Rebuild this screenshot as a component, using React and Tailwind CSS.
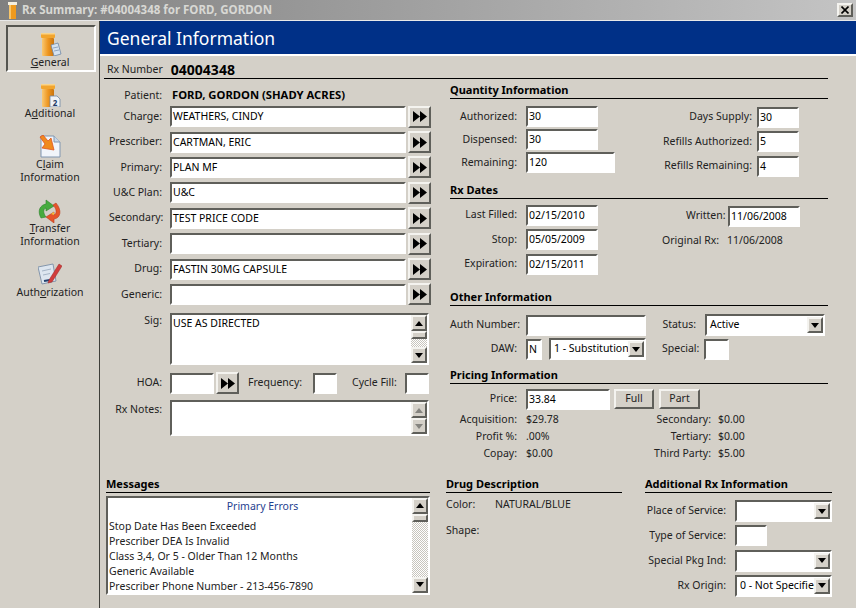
const F = { fontFamily: '"Noto Sans", Tahoma, sans-serif' };

const insetBox = "border-2 border-t-[#5f5f5a] border-l-[#5f5f5a] border-r-white border-b-white bg-white";
const raised = "border-2 border-t-[#f4f3ef] border-l-[#f4f3ef] border-r-[#5f5f5a] border-b-[#5f5f5a] bg-[#d4d0c8]";
const labelText = "text-[10.5px] text-[#222]";

function Input({ value = "", w = "w-[72px]" }) {
  return <div className={`${insetBox} ${w} h-[21px] shrink-0 px-[1px] text-[10.5px] leading-[17px] text-black whitespace-nowrap overflow-hidden`}>{value}</div>;
}

function FF() {
  return (
    <div className={`${raised} w-[23px] h-[22px] shrink-0 flex items-center justify-center`}>
      <svg width="14" height="11" viewBox="0 0 14 11"><path d="M0 0 L7 5.5 L0 11 Z M7 0 L14 5.5 L7 11 Z" fill="#000" /></svg>
    </div>
  );
}

function Arrow({ dir = "down", disabled }) {
  return (
    <div className={`${raised} w-[16px] h-[16px] shrink-0 flex items-center justify-center`}>
      <svg width="8" height="5" viewBox="0 0 8 5"><path d={dir === "down" ? "M0 0 H8 L4 5 Z" : "M0 5 H8 L4 0 Z"} fill={disabled ? "#85847f" : "#000"} /></svg>
    </div>
  );
}

function Select({ value = "", w, h = "h-[22px]" }) {
  return (
    <div className={`${insetBox} ${w} ${h} shrink-0 flex items-center justify-between text-[10.5px] text-black`}>
      <span className="pl-[3px] whitespace-nowrap overflow-hidden">{value}</span>
      <Arrow />
    </div>
  );
}

function Scrollbar({ disabled, thumb }) {
  return (
    <div className="w-[16px] h-full shrink-0 flex flex-col justify-between bg-[repeating-conic-gradient(#ffffff_0_25%,#c8c5bd_0_50%)] bg-[length:2px_2px]">
      <div>
        <Arrow dir="up" disabled={disabled} />
        {thumb && <div className={`${raised} h-[8px]`} />}
      </div>
      <Arrow dir="down" disabled={disabled} />
    </div>
  );
}

function Heading({ children, className = "" }) {
  return <div className={`font-bold text-[11px] leading-[14px] text-black border-b border-black pb-[1px] ${className}`}>{children}</div>;
}

function Row({ label, children }) {
  return (
    <div className="flex items-center h-[25.4px]">
      <div className={`w-[53px] text-right shrink-0 ${labelText} whitespace-nowrap`}>{label}</div>
      <div className="ml-[8px] flex items-center gap-[2px] min-w-0">{children}</div>
    </div>
  );
}

function Bottle({ badge, id }) {
  return (
    <svg width="24" height="23" viewBox="0 0 24 23" className="shrink-0">
      <defs>
        <linearGradient id={id} x1="0" x2="1" y1="0" y2="0">
          <stop offset="0" stopColor="#f9c872" />
          <stop offset="0.5" stopColor="#ee9620" />
          <stop offset="1" stopColor="#c9740f" />
        </linearGradient>
      </defs>
      <rect x="3" y="0" width="14" height="5" rx="1" fill="#f2a52e" />
      <rect x="3" y="0" width="14" height="1.5" fill="#f9d48a" />
      <rect x="4" y="5" width="12" height="18" rx="1" fill={`url(#${id})`} />
      {badge === "doc" && (
        <g>
          <path d="M13 12 L20 10 L23 21 L16 23 Z" fill="#d5e2f0" stroke="#6f88a6" strokeWidth="0.8" />
          <path d="M15 15 L20 14 M16 18 L21 17" stroke="#7f97b5" strokeWidth="0.8" />
        </g>
      )}
      {badge === "2" && (
        <g>
          <path d="M12 12 H19 L22 15 V23 H12 Z" fill="#eef2f7" stroke="#6f88a6" strokeWidth="0.8" />
          <text x="17" y="21.5" fontSize="8" fontWeight="bold" textAnchor="middle" fill="#223a66" style={F}>2</text>
        </g>
      )}
    </svg>
  );
}

function ClaimIcon() {
  return (
    <svg width="23" height="23" viewBox="0 0 23 23" className="shrink-0">
      <path d="M2 1 H15 L21 7 V22 H2 Z" fill="#f1f5fa" stroke="#8096b0" />
      <path d="M15 1 V7 H21" fill="#c8d6e6" stroke="#8096b0" />
      <path d="M1 2 L4 0 L9 6 L12 3 L15 15 L3 13 L6 9 Z" fill="#f08a1e" stroke="#e0531f" strokeWidth="0.8" />
    </svg>
  );
}

function TransferIcon() {
  return (
    <svg width="24" height="24" viewBox="0 0 24 24" className="shrink-0 -mb-[1px]">
      <path d="M3 19 C-1 12 2 6 8 5 L8 1 L16 7 L8 12 L8 9 C5 10 5 14 8 18 Z" fill="#46ab3e" stroke="#2f7f2d" strokeWidth="0.6" />
      <path d="M18 4 C24 11 23 19 16 20 L16 24 L8 18 L16 13 L16 16 C19 15 19 10 15 6 Z" fill="#e6552b" stroke="#b83d1d" strokeWidth="0.6" />
      <path d="M13 15 L16 13 L16 16 Z" fill="#f5c23a" />
    </svg>
  );
}

function AuthIcon() {
  return (
    <svg width="24" height="23" viewBox="0 0 24 23" className="shrink-0">
      <path d="M0 4 L15 1 L18 18 L4 21 Z" fill="#dde6f0" stroke="#8496ac" />
      <path d="M4 8 L13 6 M5 12 L12 10.5" stroke="#a5b4c6" />
      <path d="M6 18 L12 17" stroke="#23406e" strokeWidth="2" />
      <path d="M11 17 L21 1 L24 3 L14 19 L10 20 Z" fill="#d13d3d" stroke="#9a2626" strokeWidth="0.5" />
    </svg>
  );
}

function NavItem({ icon, children, selected, className = "" }) {
  return (
    <div className={`mx-[6px] w-[90px] flex flex-col items-center pr-[2px] text-[10.5px] leading-[13px] text-[#222] text-center ${selected ? "border-2 border-t-[#55554f] border-l-[#55554f] border-r-white border-b-white h-[47px] pt-[6px] bg-[#d4d0c8]" : ""} ${className}`}>
      {icon}
      {children}
    </div>
  );
}

function Sidebar() {
  return (
    <div className="w-[100px] shrink-0 border-r border-[#3f3f3a] pt-[4px] flex flex-col">
      <NavItem selected icon={<Bottle badge="doc" id="bottleA" />}><span><u>G</u>eneral</span></NavItem>
      <NavItem className="mt-[12px]" icon={<Bottle badge="2" id="bottleB" />}><span>A<u>d</u>ditional</span></NavItem>
      <NavItem className="mt-[15px]" icon={<ClaimIcon />}><span>C<u>l</u>aim<br />Information</span></NavItem>
      <NavItem className="mt-[15px]" icon={<TransferIcon />}><span><u>T</u>ransfer<br />Information</span></NavItem>
      <NavItem className="mt-[15px]" icon={<AuthIcon />}><span>Auth<u>o</u>rization</span></NavItem>
    </div>
  );
}

function LeftColumn() {
  const people = [
    ["Charge:", "WEATHERS, CINDY"],
    ["Prescriber:", "CARTMAN, ERIC"],
    ["Primary:", "PLAN MF"],
    ["U&C Plan:", "U&C"],
    ["Secondary:", "TEST PRICE CODE"],
    ["Tertiary:", ""],
    ["Drug:", "FASTIN 30MG CAPSULE"],
    ["Generic:", ""],
  ];
  return (
    <div className="w-[327px] shrink-0 pl-[5px]">
      <div className="flex items-center h-[17px] mt-[8px]">
        <div className={`w-[53px] text-right ${labelText}`}>Patient:</div>
        <div className="ml-[10px] font-bold text-[11.25px] text-black whitespace-nowrap">FORD, GORDON (SHADY ACRES)</div>
      </div>
      {people.map(([l, v]) => (
        <Row key={l} label={l}>
          <Input value={v} w="w-[236px]" />
          <FF />
        </Row>
      ))}
      <div className="flex mt-[6px]">
        <div className={`w-[53px] text-right ${labelText} leading-[14px]`}>Sig:</div>
        <div className={`${insetBox} ml-[8px] w-[259px] h-[52px] flex justify-between text-[10.5px] pl-[1px] leading-[16px] text-black`}>
          USE AS DIRECTED
          <Scrollbar thumb />
        </div>
      </div>
      <div className="flex items-center h-[22px] mt-[7px]">
        <div className={`w-[53px] text-right ${labelText}`}>HOA:</div>
        <div className="ml-[8px] flex items-center gap-[2px]"><Input w="w-[44px]" /><FF /></div>
        <div className={`ml-[9px] w-[55px] ${labelText} whitespace-nowrap`}>Frequency:</div>
        <div className="ml-[10px]"><Input w="w-[24px]" /></div>
        <div className={`ml-[15px] w-[49px] ${labelText} whitespace-nowrap`}>Cycle Fill:</div>
        <div className="ml-[4px]"><Input w="w-[24px]" /></div>
      </div>
      <div className="flex mt-[6px]">
        <div className={`w-[53px] text-right ${labelText} leading-[18px] whitespace-nowrap`}>Rx Notes:</div>
        <div className={`${insetBox} ml-[8px] w-[259px] h-[36px] flex justify-end`}>
          <Scrollbar disabled />
        </div>
      </div>
    </div>
  );
}

function QRow({ label, children, lw, h = "h-[24px]" }) {
  return (
    <div className={`flex items-center ${h}`}>
      <div className={`${lw} text-right shrink-0 ${labelText} whitespace-nowrap`}>{label}</div>
      <div className="ml-[9px] flex items-center">{children}</div>
    </div>
  );
}

function Value({ label, value, lw, vm = "ml-[9px]" }) {
  return (
    <div className="flex items-center h-[17px]">
      <div className={`${lw} text-right shrink-0 ${labelText} whitespace-nowrap`}>{label}</div>
      <div className={`${vm} ${labelText}`}>{value}</div>
    </div>
  );
}

function Btn({ children, w }) {
  return <div className={`${raised} ${w} h-[20px] flex items-center justify-center ${labelText}`}>{children}</div>;
}

function RightColumn() {
  const L = "w-[67px]";
  return (
    <div className="w-[378px] shrink-0 ml-[19px]">
      <Heading className="mt-[4px]">Quantity Information</Heading>
      <div className="flex mt-[6px] h-[84px]">
        <div className="w-[212px]">
          <QRow label="Authorized:" lw={L} h="h-[23px]"><Input value="30" /></QRow>
          <QRow label="Dispensed:" lw={L} h="h-[23px]"><Input value="30" /></QRow>
          <QRow label="Remaining:" lw={L} h="h-[23px]"><Input value="120" w="w-[89px]" /></QRow>
        </div>
        <div>
          <QRow label="Days Supply:" lw="w-[90px]" h="h-[24.5px]"><div className="-ml-[4px]"><Input value="30" w="w-[42px]" /></div></QRow>
          <QRow label="Refills Authorized:" lw="w-[90px]" h="h-[24.5px]"><div className="-ml-[4px]"><Input value="5" w="w-[42px]" /></div></QRow>
          <QRow label="Refills Remaining:" lw="w-[90px]" h="h-[24.5px]"><div className="-ml-[4px]"><Input value="4" w="w-[42px]" /></div></QRow>
        </div>
      </div>
      <Heading className="-mt-[6px]">Rx Dates</Heading>
      <div className="flex mt-[4px] h-[83px]">
        <div className="w-[236px]">
          <QRow label="Last Filled:" lw={L} h="h-[24.5px]"><Input value="02/15/2010" /></QRow>
          <QRow label="Stop:" lw={L} h="h-[24.5px]"><Input value="05/05/2009" /></QRow>
          <QRow label="Expiration:" lw={L} h="h-[24.5px]"><Input value="02/15/2011" /></QRow>
        </div>
        <div className="mt-[1px]">
          <QRow label="Written:" lw="w-[33px]" h="h-[24.5px]"><Input value="11/06/2008" /></QRow>
          <div className={`flex items-center h-[24.5px] -ml-[24px] ${labelText} whitespace-nowrap`}>
            <span className="w-[65px]">Original Rx:</span>11/06/2008
          </div>
        </div>
      </div>
      <Heading className="mt-[4px]">Other Information</Heading>
      <div className="flex mt-[7px] h-[49px]">
        <div className="w-[212px]">
          <QRow label="Auth Number:" lw={L}><Input w="w-[120px]" /></QRow>
          <QRow label="DAW:" lw={L}>
            <Input value="N" w="w-[16px]" />
            <div className="ml-[7px]"><Select value="1 - Substitution" w="w-[97px]" /></div>
          </QRow>
        </div>
        <div>
          <QRow label="Status:" lw="w-[34px]"><div><Select value="Active" w="w-[120px]" /></div></QRow>
          <QRow label="Special:" lw="w-[34px]"><div className="-ml-[1px]"><Input w="w-[25px]" /></div></QRow>
        </div>
      </div>
      <Heading className="mt-[6px]">Pricing Information</Heading>
      <div className="mt-[3px]">
        <QRow label="Price:" lw={L} h="h-[24px]">
          <Input value="33.84" w="w-[84px]" />
          <div className="ml-[4px]"><Btn w="w-[40px]">Full</Btn></div>
          <div className="ml-[5px]"><Btn w="w-[41px]">Part</Btn></div>
        </QRow>
      </div>
      <div className="flex">
        <div className="w-[192px]">
          <Value label="Acquisition:" value="$29.78" lw={L} />
          <Value label="Profit %:" value=".00%" lw={L} />
          <Value label="Copay:" value="$0.00" lw={L} />
        </div>
        <div>
          <Value label="Secondary:" value="$0.00" lw="w-[69px]" vm="ml-[7px]" />
          <Value label="Tertiary:" value="$0.00" lw="w-[69px]" vm="ml-[7px]" />
          <Value label="Third Party:" value="$5.00" lw="w-[69px]" vm="ml-[7px]" />
        </div>
      </div>
    </div>
  );
}

function Messages() {
  const lines = ["Stop Date Has Been Exceeded", "Prescriber DEA Is Invalid", "Class 3,4, Or 5 - Older Than 12 Months", "Generic Available", "Prescriber Phone Number - 213-456-7890"];
  return (
    <div className="w-[324px] shrink-0 ml-[6px]">
      <Heading>Messages</Heading>
      <div className={`${insetBox} mt-[3px] h-[99px] flex`}>
        <div className={`flex-1 pl-[1px] ${labelText} overflow-hidden`}>
          <div className="text-center text-[#1f3f8f] leading-[15px] mb-[5px] mt-[1px] pl-[4px]">Primary Errors</div>
          {lines.map((l) => <div key={l} className="leading-[15px] whitespace-nowrap">{l}</div>)}
        </div>
        <Scrollbar thumb />
      </div>
    </div>
  );
}

function DrugDescription() {
  return (
    <div className="w-[176px] shrink-0 ml-[16px]">
      <Heading>Drug Description</Heading>
      <div className={`flex items-center h-[18px] mt-[3px] ${labelText}`}>
        <span className="w-[49px]">Color:</span>NATURAL/BLUE
      </div>
      <div className={`mt-[9px] ${labelText}`}>Shape:</div>
    </div>
  );
}

function AdditionalInfo() {
  const L = `w-[81px] ${labelText} text-right whitespace-nowrap`;
  return (
    <div className="w-[187px] shrink-0 ml-[23px]">
      <Heading>Additional Rx Information</Heading>
      <div className="mt-[6px]">
        <div className="flex items-center h-[25px]"><div className={L}>Place of Service:</div><div className="ml-[9px]"><Select w="w-[97px]" /></div></div>
        <div className="flex items-center h-[24.5px]"><div className={L}>Type of Service:</div><div className="ml-[9px]"><Input w="w-[32px]" /></div></div>
        <div className="flex items-center h-[25px]"><div className={L}>Special Pkg Ind:</div><div className="ml-[9px]"><Select w="w-[97px]" /></div></div>
        <div className="flex items-center h-[25px]"><div className={L}>Rx Origin:</div><div className="ml-[9px]"><Select value="0 - Not Specified" w="w-[97px]" /></div></div>
      </div>
    </div>
  );
}

export default function App() {
  return (
    <div style={F} className="w-[856px] h-[608px] overflow-hidden bg-[#d4d0c8] flex flex-col">
      <div className="h-[21px] shrink-0 flex items-center justify-between bg-gradient-to-r from-[#808080] to-[#c4c4c4] border-b border-[#e8e8e8] pr-[3px] pl-[8px]">
        <div className="flex items-center gap-[5px]">
          <svg width="9" height="17" viewBox="0 0 9 17">
            <rect x="0" y="0" width="9" height="3" fill="#f4efe0" />
            <rect x="1" y="3" width="7" height="14" fill="#ef9a1e" />
            <rect x="1" y="3" width="2" height="14" fill="#f7c56a" />
          </svg>
          <span className="font-bold text-[11.5px] text-[#d8d8d4] whitespace-nowrap">Rx Summary: #04004348 for FORD, GORDON</span>
        </div>
        <div className={`${raised} w-[16px] h-[14px] flex items-center justify-center`}>
          <svg width="8" height="8" viewBox="0 0 8 8"><path d="M0.5 0.5 L7.5 7.5 M7.5 0.5 L0.5 7.5" stroke="#000" strokeWidth="1.6" /></svg>
        </div>
      </div>
      <div className="flex flex-1 min-h-0">
        <Sidebar />
        <div className="flex-1 min-w-0 flex flex-col">
          <div className="h-[35px] shrink-0 bg-[#003087] border-b-2 border-b-white flex items-center pl-[7px] pt-[1px] text-white text-[17.5px]">General Information</div>
          <div className="flex flex-col pl-[4px]">
            <div className="w-[724px] h-[23px] flex items-end border-b border-black">
              <span className={`ml-[3px] ${labelText}`}>Rx Number</span>
              <span className="ml-[8px] font-bold text-[14px] leading-[17px] text-black">04004348</span>
            </div>
            <div className="flex">
              <LeftColumn />
              <RightColumn />
            </div>
          </div>
          <div className="flex mt-auto mb-[10px]">
            <Messages />
            <DrugDescription />
            <AdditionalInfo />
          </div>
        </div>
      </div>
    </div>
  );
}
